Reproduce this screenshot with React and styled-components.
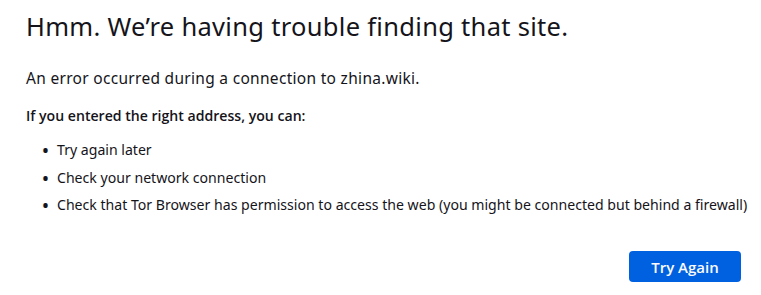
import React from "react";
import styled, { createGlobalStyle } from "styled-components";

const GlobalStyle = createGlobalStyle`
  html, body {
    margin: 0;
    padding: 0;
    background: #ffffff;
  }
  body {
    font-family: "Noto Sans", "Open Sans", sans-serif;
    color: #15141a;
  }
`;

const Page = styled.main`
  width: 761px;
  height: 295px;
  box-sizing: border-box;
  padding: 9px 0 0 26px;
  display: flex;
  flex-direction: column;
`;

const Title = styled.h1`
  margin: 0;
  font-size: 25.5px;
  letter-spacing: 0.3px;
  font-weight: 400;
  line-height: 34px;
`;

const Lead = styled.p`
  margin: 24px 0 0;
  font-size: 15.5px;
  letter-spacing: 0.3px;
  line-height: 22px;
`;

const Subhead = styled.p`
  margin: 17px 0 0;
  font-family: "Open Sans", "Noto Sans", sans-serif;
  font-size: 14.1px;
  font-weight: 600;
  line-height: 20px;
`;

const List = styled.ul`
  margin: 14px 0 0;
  padding: 0 0 0 31px;
  list-style: none;
  font-size: 14.1px;
  line-height: 20px;

  li + li {
    margin-top: 7.5px;
  }

  li::before {
    content: "•";
    display: inline-block;
    width: 14px;
    margin-left: -14px;
    transform: translateY(1.5px) scale(1.4);
    transform-origin: 3px 60%;
  }
`;

const Actions = styled.div`
  display: flex;
  justify-content: flex-end;
  padding-right: 20px;
  margin-top: 36px;
`;

const Button = styled.button`
  width: 112px;
  height: 31px;
  border: none;
  border-radius: 4px;
  background: #0061e0;
  color: #fbfbfe;
  font-family: "Open Sans", "Noto Sans", sans-serif;
  font-size: 15px;
  font-weight: 600;
  cursor: pointer;
`;

export default function App() {
  return (
    <>
      <GlobalStyle />
      <Page>
        <Title>Hmm. We’re having trouble finding that site.</Title>
        <Lead>An error occurred during a connection to zhina.wiki.</Lead>
        <Subhead>If you entered the right address, you can:</Subhead>
        <List>
          <li>Try again later</li>
          <li>Check your network connection</li>
          <li>
            Check that Tor Browser has permission to access the web (you might
            be connected but behind a firewall)
          </li>
        </List>
        <Actions>
          <Button>Try Again</Button>
        </Actions>
      </Page>
    </>
  );
}
